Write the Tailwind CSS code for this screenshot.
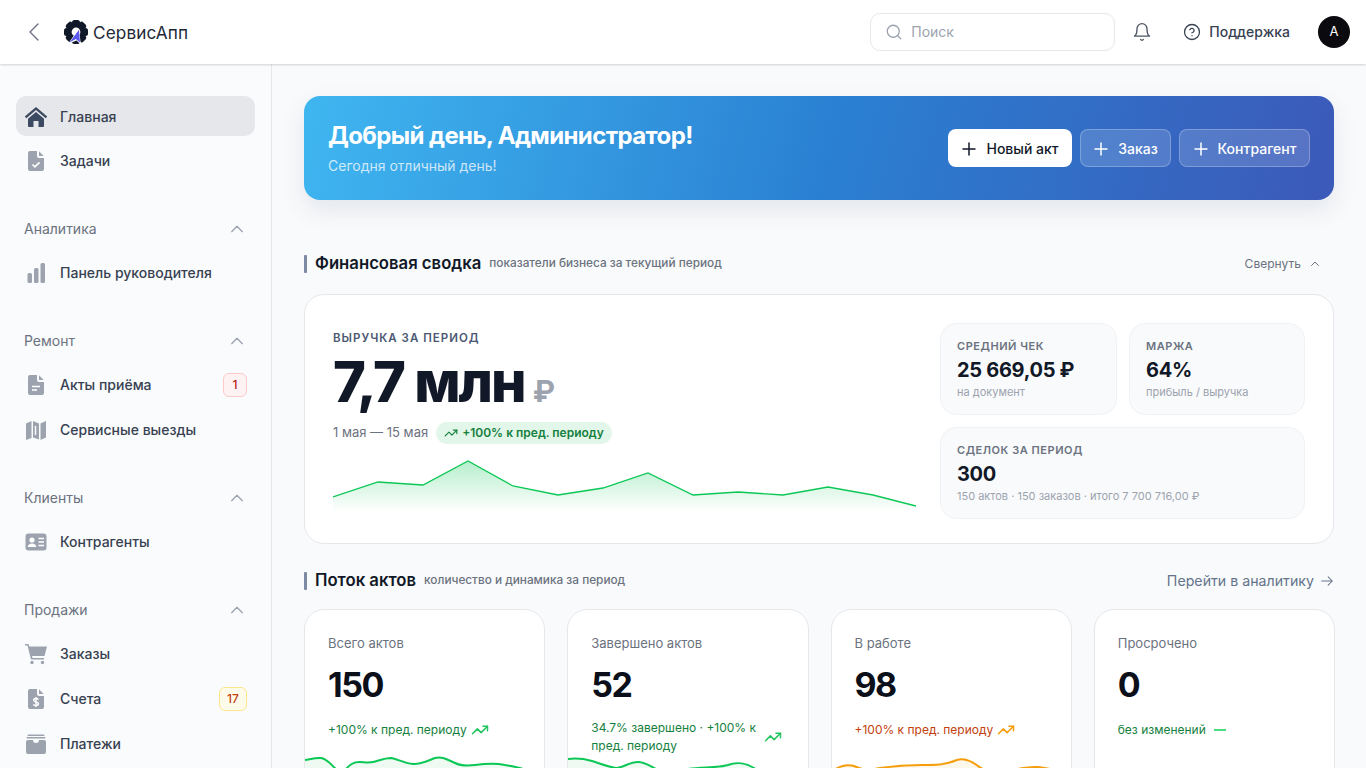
<!DOCTYPE html>
<html lang="ru">
<head>
  <meta charset="UTF-8">
  <meta name="viewport" content="width=device-width, initial-scale=1.0">
  <title>СервисАпп</title>
  <script src="https://cdn.jsdelivr.net/npm/@tailwindcss/browser@4"></script>
</head>
<body class="h-screen overflow-hidden bg-[#f9fafb] font-['Inter',sans-serif] text-[#111827]">
  <!-- header -->
  <header class="relative z-10 flex h-16 items-center bg-white pl-6 pr-4 shadow-[0_1px_2px_rgba(0,0,0,0.16)]">
    <svg class="h-5 w-5 text-[#6b7280]" viewBox="0 0 20 20" fill="none" stroke="currentColor" stroke-width="1.4" stroke-linecap="round" stroke-linejoin="round"><path d="M14 2 6 10l8 8"/></svg>
    <svg class="ml-[19px] h-[26px] w-[26px]" viewBox="0 0 26 26">
      <g fill="#111827">
        <rect x="9" y="1" width="8" height="5" rx="2.500"/>
        <rect x="9" y="20" width="8" height="5" rx="2.500"/>
        <rect x="1" y="9" width="5" height="8" rx="2.500"/>
        <rect x="20" y="9" width="5" height="8" rx="2.500"/>
        <rect x="9" y="1" width="8" height="5" rx="2.500" transform="rotate(45 13 13)"/>
        <rect x="9" y="20" width="8" height="5" rx="2.500" transform="rotate(45 13 13)"/>
        <rect x="1" y="9" width="5" height="8" rx="2.500" transform="rotate(45 13 13)"/>
        <rect x="20" y="9" width="5" height="8" rx="2.500" transform="rotate(45 13 13)"/>
      </g>
      <circle cx="13" cy="13" r="7.200" fill="none" stroke="#111827" stroke-width="5.600"/>
      <path d="M5 25 16 9l1.800 16.500-4.300-4z" fill="#fff"/>
      <path d="M6.500 23.500 16 10.800l1 12.700-4.200-3.600z" fill="#5b57f2"/>
    </svg>
    <span class="ml-1 pt-px text-[17.2px] tracking-[0.1px] text-[#1f2937]">СервисАпп</span>

    <div class="ml-auto flex h-[38px] w-[245px] items-center gap-2 rounded-[10px] border border-[#e5e7eb] bg-white px-[14px]">
      <svg class="h-[18px] w-[18px] text-[#9ca3af]" viewBox="0 0 24 24" fill="none" stroke="currentColor" stroke-width="1.7" stroke-linecap="round"><circle cx="11" cy="11" r="8"/><path d="m21 21-4.300-4.300"/></svg>
      <span class="text-sm text-[#9ca3af]">Поиск</span>
    </div>
    <svg class="ml-[17px] h-5 w-5 text-[#4b5563]" viewBox="0 0 24 24" fill="none" stroke="currentColor" stroke-width="1.6" stroke-linecap="round" stroke-linejoin="round"><path d="M6 8a6 6 0 0 1 12 0c0 7 3 9 3 9H3s3-2 3-9"/><path d="M10.300 21a2 2 0 0 0 3.400 0"/></svg>
    <svg class="ml-[31px] h-[18px] w-[18px] text-[#374151]" viewBox="0 0 24 24" fill="none" stroke="currentColor" stroke-width="1.7" stroke-linecap="round" stroke-linejoin="round"><circle cx="12" cy="12" r="10"/><path d="M9.100 9a3 3 0 0 1 5.800 1c0 2-3 3-3 3"/><path d="M12 17h.01"/></svg>
    <span class="ml-2 text-sm font-medium text-[#374151]">Поддержка</span>
    <div class="ml-7 flex h-8 w-8 items-center justify-center rounded-full bg-[#0b0b0f] text-[13px] text-white">А</div>
  </header>

  <div class="flex h-[704px]">
    <!-- sidebar -->
    <aside class="w-[272px] shrink-0 overflow-hidden border-r border-[#e5e7eb] bg-[#fafbfc] px-4 pt-8">
      <nav class="flex flex-col gap-[5px]">
        <a class="flex h-10 items-center gap-3 rounded-[10px] bg-[#e5e7eb] px-2 pt-px text-sm font-medium text-[#374151]">
          <svg class="h-6 w-6 text-[#3b4a60]" viewBox="0 0 24 24" fill="currentColor"><path d="M12 2 .8 11.600l1.500 1.700L12 5l9.700 8.300 1.500-1.700z"/><path d="M12 7 4 13.800V21a1 1 0 0 0 1 1h4.500v-6h5v6H19a1 1 0 0 0 1-1v-7.200z"/></svg>
          Главная
        </a>
        <a class="flex h-10 items-center gap-3 px-2 text-sm font-medium text-[#374151]">
          <svg class="h-6 w-6 text-[#9ca3af]" viewBox="0 0 24 24" fill="currentColor"><path d="M6 2h7v5a2 2 0 0 0 2 2h5v11a2 2 0 0 1-2 2H6a2 2 0 0 1-2-2V4a2 2 0 0 1 2-2z"/><path d="M15 2.300 19.700 7H15z"/><path d="m8.500 15.500 2.400 2.400 4.600-4.600" fill="none" stroke="#fff" stroke-width="1.7"/></svg>
          Задачи
        </a>
      </nav>

      <div class="mt-[28px] flex h-10 items-center justify-between pl-2 pr-[10px] text-sm text-[#6b7280]">
        Аналитика
        <svg class="h-4 w-4 text-[#9ca3af]" viewBox="0 0 24 24" fill="none" stroke="currentColor" stroke-width="2" stroke-linecap="round" stroke-linejoin="round"><path d="m4 16 8-8 8 8"/></svg>
      </div>
      <nav class="mt-[4px] flex flex-col gap-[5px]">
        <a class="flex h-10 items-center gap-3 px-2 text-sm font-medium text-[#374151]">
          <svg class="h-6 w-6 text-[#9ca3af]" viewBox="0 0 24 24" fill="currentColor"><rect x="3.500" y="12" width="4.500" height="10" rx="1.500"/><rect x="10" y="7" width="4.500" height="15" rx="1.500"/><rect x="16.500" y="2" width="4.500" height="20" rx="1.500"/></svg>
          Панель руководителя
        </a>
      </nav>

      <div class="mt-[28px] flex h-10 items-center justify-between pl-2 pr-[10px] text-sm text-[#6b7280]">
        Ремонт
        <svg class="h-4 w-4 text-[#9ca3af]" viewBox="0 0 24 24" fill="none" stroke="currentColor" stroke-width="2" stroke-linecap="round" stroke-linejoin="round"><path d="m4 16 8-8 8 8"/></svg>
      </div>
      <nav class="mt-[4px] flex flex-col gap-[5px]">
        <a class="flex h-10 items-center gap-3 px-2 text-sm font-medium text-[#374151]">
          <svg class="h-6 w-6 text-[#9ca3af]" viewBox="0 0 24 24" fill="currentColor"><path d="M6 2h7v5a2 2 0 0 0 2 2h5v11a2 2 0 0 1-2 2H6a2 2 0 0 1-2-2V4a2 2 0 0 1 2-2z"/><path d="M15 2.300 19.700 7H15z"/><path d="M8 13.500h8M8 17h5" stroke="#fff" stroke-width="1.6"/></svg>
          Акты приёма
          <span class="ml-auto flex h-6 w-6 items-center justify-center rounded-md border border-[#fecaca] bg-[#fef2f2] text-xs font-medium text-[#b91c1c]">1</span>
        </a>
        <a class="flex h-10 items-center gap-3 px-2 text-sm font-medium text-[#374151]">
          <svg class="h-6 w-6 text-[#9ca3af]" viewBox="0 0 24 24" fill="currentColor"><path d="M2 5.500 7.500 3v17L2 22z"/><path d="M9 3l6 2.500v16L9 19.500z"/><path d="M16.500 5.500 22 3v16.500L16.500 22z"/><path d="M11.500 8v9" stroke="#fafbfc" stroke-width="1.500"/></svg>
          Сервисные выезды
        </a>
      </nav>

      <div class="mt-[28px] flex h-10 items-center justify-between pl-2 pr-[10px] text-sm text-[#6b7280]">
        Клиенты
        <svg class="h-4 w-4 text-[#9ca3af]" viewBox="0 0 24 24" fill="none" stroke="currentColor" stroke-width="2" stroke-linecap="round" stroke-linejoin="round"><path d="m4 16 8-8 8 8"/></svg>
      </div>
      <nav class="mt-[4px] flex flex-col gap-[5px]">
        <a class="flex h-10 items-center gap-3 px-2 text-sm font-medium text-[#374151]">
          <svg class="h-6 w-6 text-[#9ca3af]" viewBox="0 0 24 24" fill="currentColor"><rect x="1.500" y="3.500" width="21" height="17" rx="3"/><circle cx="8" cy="10" r="2.600" fill="#fff"/><path d="M3.800 17c0-2.200 1.900-3.500 4.200-3.500s4.200 1.300 4.200 3.500z" fill="#fff"/><path d="M14.500 8.500H20M14.500 12H20M14.500 15.500H20" stroke="#fff" stroke-width="1.500"/></svg>
          Контрагенты
        </a>
      </nav>

      <div class="mt-[28px] flex h-10 items-center justify-between pl-2 pr-[10px] text-sm text-[#6b7280]">
        Продажи
        <svg class="h-4 w-4 text-[#9ca3af]" viewBox="0 0 24 24" fill="none" stroke="currentColor" stroke-width="2" stroke-linecap="round" stroke-linejoin="round"><path d="m4 16 8-8 8 8"/></svg>
      </div>
      <nav class="mt-[4px] flex flex-col gap-[5px]">
        <a class="flex h-10 items-center gap-3 px-2 text-sm font-medium text-[#374151]">
          <svg class="h-6 w-6 text-[#9ca3af]" viewBox="0 0 24 24" fill="currentColor"><path d="M1 2h3.500l.8 2.500H23l-2.500 9.500H8l.5 2H20v1.500H7L3.500 3.500H1z"/><circle cx="8" cy="20.500" r="1.700"/><circle cx="18.500" cy="20.500" r="1.700"/></svg>
          Заказы
        </a>
        <a class="flex h-10 items-center gap-3 px-2 text-sm font-medium text-[#374151]">
          <svg class="h-6 w-6 text-[#9ca3af]" viewBox="0 0 24 24" fill="currentColor"><path d="M6 2h7v5a2 2 0 0 0 2 2h5v11a2 2 0 0 1-2 2H6a2 2 0 0 1-2-2V4a2 2 0 0 1 2-2z"/><path d="M15 2.300 19.700 7H15z"/><path d="M14.500 12.500c-.5-.8-1.400-1-2.500-1-1.300 0-2.300.6-2.300 1.700 0 2.500 4.800 1.200 4.800 3.600 0 1.100-1 1.700-2.500 1.700-1.200 0-2.100-.4-2.600-1.200M12 10v10" fill="none" stroke="#fff" stroke-width="1.400"/></svg>
          Счета
          <span class="ml-auto flex h-6 w-7 items-center justify-center rounded-md border border-[#fde68a] bg-[#fffbeb] text-xs font-medium text-[#c2410c]">17</span>
        </a>
        <a class="flex h-10 items-center gap-3 px-2 text-sm font-medium text-[#374151]">
          <svg class="h-6 w-6 text-[#9ca3af]" viewBox="0 0 24 24" fill="currentColor"><rect x="3.500" y="2.500" width="17" height="1.500" rx=".7"/><rect x="2.500" y="5" width="19" height="1.500" rx=".7"/><path d="M4 8h5a3 3 0 0 0 6 0h5a2 2 0 0 1 2 2v10a2 2 0 0 1-2 2H4a2 2 0 0 1-2-2V10a2 2 0 0 1 2-2z"/></svg>
          Платежи
        </a>
      </nav>
    </aside>

    <!-- content -->
    <main class="min-w-0 flex-1 overflow-hidden px-8 pt-8">
      <section class="flex h-[104px] items-center justify-between rounded-2xl bg-[linear-gradient(105deg,#3fb6f0_0%,#2a7fd2_52%,#3c59b8_100%)] pl-6 pr-6 shadow-[0_10px_24px_rgba(30,60,110,0.10)]">
        <div>
          <h1 class="text-2xl leading-8 font-bold tracking-[-0.62px] text-white">Добрый день, Администратор!</h1>
          <p class="mt-[4px] text-sm text-white/75">Сегодня отличный день!</p>
        </div>
        <div class="flex gap-2">
          <button class="flex h-[38px] w-[124px] items-center justify-center gap-[9px] rounded-lg bg-white pt-px text-sm font-medium text-[#111827]">
            <svg class="h-4 w-4" viewBox="0 0 16 16" fill="none" stroke="currentColor" stroke-width="1.500" stroke-linecap="round"><path d="M8 2v12M2 8h12"/></svg>
            Новый акт
          </button>
          <button class="flex h-[38px] w-[91px] items-center justify-center gap-[9px] rounded-lg border border-white/25 bg-white/15 pt-px text-sm font-medium text-white">
            <svg class="h-4 w-4" viewBox="0 0 16 16" fill="none" stroke="currentColor" stroke-width="1.500" stroke-linecap="round"><path d="M8 2v12M2 8h12"/></svg>
            Заказ
          </button>
          <button class="flex h-[38px] w-[131px] items-center justify-center gap-[9px] rounded-lg border border-white/25 bg-white/15 pt-px text-sm font-medium text-white">
            <svg class="h-4 w-4" viewBox="0 0 16 16" fill="none" stroke="currentColor" stroke-width="1.500" stroke-linecap="round"><path d="M8 2v12M2 8h12"/></svg>
            Контрагент
          </button>
        </div>
      </section>

      <div class="mt-[54px] flex h-5 items-center">
        <span class="h-[18px] w-[3px] rounded-[1px] bg-[#7d8aa3]"></span>
        <h2 class="ml-2 text-[16.7px] font-semibold text-[#111827]">Финансовая сводка</h2>
        <span class="ml-2 text-[11.8px] font-medium text-[#6b7280]">показатели бизнеса за текущий период</span>
        <span class="ml-auto flex items-center gap-2 pr-[13px] text-xs text-[#6b7280]">Свернуть
          <svg class="h-3 w-3" viewBox="0 0 24 24" fill="none" stroke="currentColor" stroke-width="2" stroke-linecap="round" stroke-linejoin="round"><path d="m5 15 7-7 7 7"/></svg>
        </span>
      </div>

      <section class="mt-[20px] flex h-[250px] gap-6 rounded-[20px] border border-[#e5e7eb] bg-white px-7 pt-7">
        <div class="min-w-0 flex-1 pt-[7px]">
          <div class="text-[11.5px] leading-[16px] font-semibold tracking-[1px] text-[#4b5872]">ВЫРУЧКА ЗА ПЕРИОД</div>
          <div class="mt-[7px] flex items-baseline gap-2">
            <span class="text-[56px] leading-[58px] font-extrabold tracking-[-2px] text-[#111827]">7,7 млн</span>
            <span class="text-[30px] leading-none font-bold text-[#9ca3af]">₽</span>
          </div>
          <div class="mt-[11px] flex h-[22px] items-center gap-2">
            <span class="text-[13px] text-[#6b7280]">1 мая — 15 мая</span>
            <span class="flex h-[22px] items-center gap-1 rounded-full bg-[#e3f6ea] px-2 text-xs font-semibold text-[#15803d]">
              <svg class="h-[14px] w-[14px]" viewBox="0 0 24 24" fill="none" stroke="currentColor" stroke-width="2" stroke-linecap="round" stroke-linejoin="round"><path d="m22 7-8.500 8.500-5-5L2 17"/><path d="M16 7h6v6"/></svg>
              +100% к пред. периоду
            </span>
          </div>
          <svg class="mt-[15px] block h-[56px] w-[583px]" viewBox="0 0 583 56" fill="none">
            <defs>
              <linearGradient id="revFill" x1="0" y1="0" x2="0" y2="1">
                <stop offset="0" stop-color="#0bc755" stop-opacity="0.30"/>
                <stop offset="1" stop-color="#0bc755" stop-opacity="0"/>
              </linearGradient>
            </defs>
            <path d="M0 38 45 23 90 26 135 2 180 27 225 36 270 29 315 14 360 36 405 33 450 36 495 28 540 36 583 47V53H0z" fill="url(#revFill)"/>
            <path d="M0 38 45 23 90 26 135 2 180 27 225 36 270 29 315 14 360 36 405 33 450 36 495 28 540 36 583 47" stroke="#0bc755" stroke-width="1.300"/>
          </svg>
        </div>

        <div class="grid w-[365px] shrink-0 grid-cols-[177px_176px] grid-rows-[92px_92px] gap-3 self-start">
          <div class="rounded-2xl border border-[#f0f2f5] bg-[#f9fafb] px-4 pt-[15px]">
            <div class="text-[11px] leading-[14px] font-semibold tracking-[0.55px] text-[#6b7280]">СРЕДНИЙ ЧЕК</div>
            <div class="mt-[4px] text-[20px] leading-[26px] font-bold tracking-[-0.3px] text-[#111827]">25 669,05 ₽</div>
            <div class="mt-[2px] text-[11px] leading-[14px] text-[#9ca3af]">на документ</div>
          </div>
          <div class="rounded-2xl border border-[#f0f2f5] bg-[#f9fafb] px-4 pt-[15px]">
            <div class="text-[11px] leading-[14px] font-semibold tracking-[0.55px] text-[#6b7280]">МАРЖА</div>
            <div class="mt-[4px] text-[20px] leading-[26px] font-bold tracking-[-0.3px] text-[#111827]">64%</div>
            <div class="mt-[2px] text-[11px] leading-[14px] text-[#9ca3af]">прибыль / выручка</div>
          </div>
          <div class="col-span-2 rounded-2xl border border-[#f0f2f5] bg-[#f9fafb] px-4 pt-[15px]">
            <div class="text-[11px] leading-[14px] font-semibold tracking-[0.55px] text-[#6b7280]">СДЕЛОК ЗА ПЕРИОД</div>
            <div class="mt-[4px] text-[20px] leading-[26px] font-bold tracking-[-0.3px] text-[#111827]">300</div>
            <div class="mt-[2px] text-[11px] leading-[14px] text-[#9ca3af]">150 актов · 150 заказов · итого 7 700 716,00 ₽</div>
          </div>
        </div>
      </section>

      <div class="mt-[27px] flex h-5 items-center">
        <span class="h-[18px] w-[3px] rounded-[1px] bg-[#7d8aa3]"></span>
        <h2 class="ml-2 text-[16.7px] font-semibold text-[#111827]">Поток актов</h2>
        <span class="ml-2 text-[11.8px] font-medium text-[#6b7280]">количество и динамика за период</span>
        <span class="ml-auto flex items-center gap-[6px] text-[14.2px] text-[#64748b]">Перейти в аналитику
          <svg class="h-[14px] w-[14px]" viewBox="0 0 24 24" fill="none" stroke="currentColor" stroke-width="1.800" stroke-linecap="round" stroke-linejoin="round"><path d="M3 12h18M14 5l7 7-7 7"/></svg>
        </span>
      </div>

      <section class="mt-[18px] grid w-[1031px] grid-cols-4 gap-[22px]">
        <div class="h-[220px] overflow-hidden rounded-[20px] border border-[#e5e7eb] bg-white px-[23px] pt-[23px]">
          <div class="text-[13px] leading-[20px] text-[#6b7280]">Всего актов</div>
          <div class="mt-[11px] text-[34px] leading-[42px] font-bold tracking-[-1.5px] text-[#0b0f19]">150</div>
          <div class="mt-[15px] flex items-center gap-1 text-xs leading-[18px] text-[#15803d]">
            <span>+100% к пред. периоду</span>
            <svg class="h-[18px] w-[18px] shrink-0 text-[#22c55e]" viewBox="0 0 24 24" fill="none" stroke="currentColor" stroke-width="2" stroke-linecap="round" stroke-linejoin="round"><path d="m22 7-8.500 8.500-5-5L2 17"/><path d="M16 7h6v6"/></svg>
          </div>
          <svg class="-mx-[23px] mt-[9px] block h-[60px] w-[241px] max-w-none" viewBox="0 0 241 60" fill="none">
            <path d="M0 12C6 11 11 9.500 16 10C22 10.500 26 17 31 21C34 24 38 24 41 21C45 16 49 14 54 14C59 14 63 15 68 14C73 13 79 10 86 10C92 11 99 15 108 16C116 16.500 122 13 130 10C137 8 143 12 150 15C156 18 162 18 170 17C178 16 190 15 200 17C206 18 212 19 218 21V60H0z" fill="#22c55e" fill-opacity="0.08"/>
            <path d="M0 12C6 11 11 9.500 16 10C22 10.500 26 17 31 21C34 24 38 24 41 21C45 16 49 14 54 14C59 14 63 15 68 14C73 13 79 10 86 10C92 11 99 15 108 16C116 16.500 122 13 130 10C137 8 143 12 150 15C156 18 162 18 170 17C178 16 190 15 200 17C206 18 212 19 218 21" stroke="#0bc755" stroke-width="2"/>
          </svg>
        </div>

        <div class="h-[220px] overflow-hidden rounded-[20px] border border-[#e5e7eb] bg-white px-[23px] pt-[23px]">
          <div class="text-[13px] leading-[20px] text-[#6b7280]">Завершено актов</div>
          <div class="mt-[11px] text-[34px] leading-[42px] font-bold tracking-[-1.5px] text-[#0b0f19]">52</div>
          <div class="mt-[13px] flex items-center gap-1 text-xs leading-[18px] text-[#15803d]">
            <span class="w-[169px]">34.7% завершено · +100% к пред. периоду</span>
            <svg class="h-[18px] w-[18px] shrink-0 text-[#22c55e]" viewBox="0 0 24 24" fill="none" stroke="currentColor" stroke-width="2" stroke-linecap="round" stroke-linejoin="round"><path d="m22 7-8.500 8.500-5-5L2 17"/><path d="M16 7h6v6"/></svg>
          </div>
          <svg class="-mx-[23px] -mt-[7px] block h-[60px] w-[241px] max-w-none" viewBox="0 0 241 60" fill="none">
            <path d="M0 11C8 10 17 11 24 13C33 16 40 19 48 20C55 20 61 14 70 14C77 14 82 18 90 22C97 25 105 24 120 21C135 19 150 20 160 17C168 14 178 15 186 20C192 24 198 26 204 27V60H0z" fill="#22c55e" fill-opacity="0.08"/>
            <path d="M0 11C8 10 17 11 24 13C33 16 40 19 48 20C55 20 61 14 70 14C77 14 82 18 90 22C97 25 105 24 120 21C135 19 150 20 160 17C168 14 178 15 186 20C192 24 198 26 204 27" stroke="#0bc755" stroke-width="2"/>
          </svg>
        </div>

        <div class="h-[220px] overflow-hidden rounded-[20px] border border-[#e5e7eb] bg-white px-[23px] pt-[23px]">
          <div class="text-[13px] leading-[20px] text-[#6b7280]">В работе</div>
          <div class="mt-[11px] text-[34px] leading-[42px] font-bold tracking-[-1.5px] text-[#0b0f19]">98</div>
          <div class="mt-[15px] flex items-center gap-1 text-xs leading-[18px] text-[#c2410c]">
            <span>+100% к пред. периоду</span>
            <svg class="h-[18px] w-[18px] shrink-0 text-[#f59e0b]" viewBox="0 0 24 24" fill="none" stroke="currentColor" stroke-width="2" stroke-linecap="round" stroke-linejoin="round"><path d="m22 7-8.500 8.500-5-5L2 17"/><path d="M16 7h6v6"/></svg>
          </div>
          <svg class="-mx-[23px] mt-[9px] block h-[60px] w-[241px] max-w-none" viewBox="0 0 241 60" fill="none">
            <path d="M2 22C8 18 15 16 22 18C28 21 34 23 48 20C62 18 76 17 90 17C103 17 113 17 122 13C130 9 138 12 146 18C152 23 160 24 172 23C185 22 195 18 206 19C214 20 222 22 235 24V60H2z" fill="#f59e0b" fill-opacity="0.08"/>
            <path d="M2 22C8 18 15 16 22 18C28 21 34 23 48 20C62 18 76 17 90 17C103 17 113 17 122 13C130 9 138 12 146 18C152 23 160 24 172 23C185 22 195 18 206 19C214 20 222 22 235 24" stroke="#f59e0b" stroke-width="2"/>
          </svg>
        </div>

        <div class="h-[220px] overflow-hidden rounded-[20px] border border-[#e5e7eb] bg-white px-[23px] pt-[23px]">
          <div class="text-[13px] leading-[20px] text-[#6b7280]">Просрочено</div>
          <div class="mt-[11px] text-[34px] leading-[42px] font-bold tracking-[-1.5px] text-[#0b0f19]">0</div>
          <div class="mt-[15px] flex h-[18px] items-center gap-2 text-xs leading-[18px] text-[#15803d]">
            <span>без изменений</span>
            <span class="h-[2px] w-3 bg-[#4ade80]"></span>
          </div>
        </div>
      </section>
    </main>
  </div>
</body>
</html>
